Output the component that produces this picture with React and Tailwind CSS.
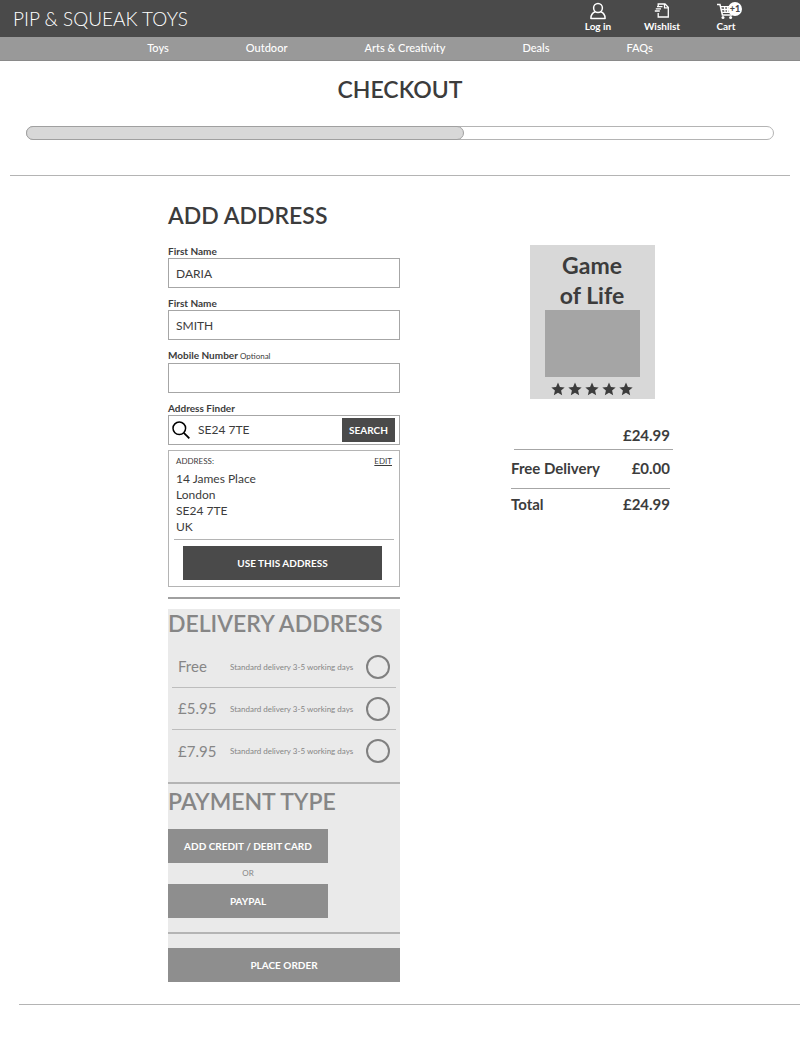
import React, { useState } from 'react';

const NAV_LINKS = ['Toys', 'Outdoor', 'Arts & Creativity', 'Deals', 'FAQs'];

const DELIVERY_OPTIONS = [
  { id: 'free', price: 'Free' },
  { id: 'mid', price: '£5.95' },
  { id: 'fast', price: '£7.95' },
];

const ADDRESS_LINES = ['14 James Place', 'London', 'SE24 7TE', 'UK'];

function UserIcon() {
  return (
    <svg viewBox="0 0 18 18" className="h-[18px] w-[18px]" fill="none" stroke="currentColor" strokeWidth="1.5" strokeLinejoin="round">
      <circle cx="9" cy="6" r="4.4" />
      <path d="M6.4 9.8C3.4 10.8 1.9 13 1.9 16.4h14.2c0-3.4-1.5-5.6-4.5-6.6" />
    </svg>
  );
}

function WishlistIcon() {
  return (
    <svg viewBox="0 0 18 18" className="h-[18px] w-[18px]" fill="none" stroke="currentColor" strokeWidth="1.3">
      <path d="M5.2 4V2H12l3.3 3.3V15H5.2v-4" />
      <path d="M11.5 2v3.800h3.800M4 4.600h5.500M2.800 6.800H8M1.800 9h5" />
    </svg>
  );
}

function CartIcon() {
  return (
    <svg viewBox="0 0 20 18" className="h-[18px] w-5" fill="none" stroke="currentColor" strokeWidth="1.5">
      <path d="M1 2.600h3L6.400 13H16" />
      <path d="M4.600 4.600H17l-1.400 5.800H6.200M5 7.500h11M8.500 4.600l.6 6M11.500 4.600v6M14.500 4.600l-.6 6" strokeWidth="1.3" />
      <circle cx="7" cy="15.600" r="1.5" fill="currentColor" stroke="none" />
      <circle cx="14.600" cy="15.600" r="1.5" fill="currentColor" stroke="none" />
    </svg>
  );
}

function Star() {
  return (
    <svg viewBox="0 0 24 24" className="h-3.5 w-3.5" fill="currentColor">
      <path d="M12 1l3.300 7.500 8.100.8-6.100 5.400 1.800 8L12 18.500l-7.100 4.200 1.800-8L.6 9.300l8.100-.8z" />
    </svg>
  );
}

function IconLink({ label, children }) {
  return (
    <a href="#" className="flex w-16 flex-col items-center pb-1 text-[10px] leading-3 font-bold text-white">
      <span className="relative">{children}</span>
      {label}
    </a>
  );
}

function Field({ id, label, hint, defaultValue }) {
  return (
    <div>
      <label htmlFor={id} className="block text-[10px] leading-[14px] font-bold">
        {label}
        {hint && <span className="text-[8px] font-normal"> {hint}</span>}
      </label>
      <input
        id={id}
        type="text"
        defaultValue={defaultValue}
        className="block h-[30px] w-full border border-[#a6a6a6] px-[7px] text-xs outline-none"
      />
    </div>
  );
}

function SectionTitle({ children }) {
  return <h2 className="text-[23px] leading-7 font-semibold whitespace-nowrap">{children}</h2>;
}

export default function App() {
  const [delivery, setDelivery] = useState(null);

  return (
    <div className="bg-white font-['Lato','Open_Sans',sans-serif] text-[#3c3c3c]">
      <header>
        <div className="flex h-[37px] items-center justify-between bg-[#4a4a4a] pr-[42px] pl-[13px]">
          <a href="#" className="text-[19px] leading-6 font-light text-white">PIP &amp; SQUEAK TOYS</a>
          <div className="flex">
            <IconLink label="Log in"><UserIcon /></IconLink>
            <IconLink label="Wishlist"><WishlistIcon /></IconLink>
            <IconLink label="Cart">
              <CartIcon />
              <span className="absolute top-0 -right-1.5 flex h-3.5 w-3.5 items-center justify-center rounded-full bg-white text-[9px] leading-3 font-black text-[#4a4a4a]">
                +1
              </span>
            </IconLink>
          </div>
        </div>
        <nav className="flex h-6 items-center justify-center gap-[77px] border-b border-[#8a8a8a] bg-[#999] text-[11px] font-medium text-white">
          {NAV_LINKS.map((link) => (
            <a key={link} href="#">{link}</a>
          ))}
        </nav>
      </header>

      <h1 className="mt-3 text-center text-[23px] leading-8 font-semibold">CHECKOUT</h1>

      <div className="mx-[26px] mt-[21px] h-3.5 rounded-full border border-[#b4b4b4]">
        <div className="-m-px h-3.5 w-[58.7%] rounded-full border border-[#a0a0a0] bg-[#d8d8d8]" />
      </div>

      <hr className="mx-2.5 mt-[35px] border-[#b4b4b4]" />

      <main className="flex items-start gap-[111px] pt-[25px] pl-[168px]">
        <form className="w-[232px]" onSubmit={(e) => e.preventDefault()}>
          <SectionTitle>ADD ADDRESS</SectionTitle>

          <div className="mt-[15px] space-y-2">
            <Field id="first-name" label="First Name" defaultValue="DARIA" />
            <Field id="last-name" label="First Name" defaultValue="SMITH" />
            <Field id="mobile" label="Mobile Number" hint="Optional" />
            <div>
              <label htmlFor="finder" className="block text-[10px] leading-[14px] font-bold">Address Finder</label>
              <div className="flex h-[30px] items-center border border-[#a6a6a6] pr-1 pl-[3px]">
                <svg viewBox="0 0 18 18" className="h-[18px] w-[18px] shrink-0 text-black" fill="none" stroke="currentColor" strokeWidth="1.5">
                  <circle cx="7.3" cy="7.3" r="6.3" />
                  <path d="M11.8 11.8L17.3 17.3" strokeWidth="1.8" />
                </svg>
                <input id="finder" type="text" defaultValue="SE24 7TE" className="ml-2 w-full min-w-0 text-xs outline-none" />
                <button type="button" className="h-6 w-[53px] shrink-0 bg-[#4a4a4a] text-[10px] font-bold text-white">SEARCH</button>
              </div>
            </div>
          </div>

          <div className="mt-[5px] border border-[#b4b4b4] px-[5px] pt-1 pb-1.5">
            <div className="flex justify-between px-0.5 text-[8px] leading-3">
              <span>ADDRESS:</span>
              <a href="#" className="underline">EDIT</a>
            </div>
            <address className="mt-1 px-0.5 pb-1 text-xs leading-4 not-italic">
              {ADDRESS_LINES.map((line) => (
                <div key={line}>{line}</div>
              ))}
            </address>
            <hr className="border-[#b4b4b4]" />
            <button type="button" className="mx-[9px] mt-1.5 block h-[34px] w-[199px] bg-[#4a4a4a] text-[10px] font-bold text-white">
              USE THIS ADDRESS
            </button>
          </div>

          <hr className="mt-2.5 border-t-2 border-[#a0a0a0]" />

          <div className="mt-2.5 bg-[#eaeaea] text-[#868686]">
            <SectionTitle>DELIVERY ADDRESS</SectionTitle>
            <div className="px-1 pt-[9px] pb-2.5">
              {DELIVERY_OPTIONS.map(({ id, price }) => (
                <label key={id} className="flex h-[42px] items-center border-b border-[#bdbdbd] px-1.5 last:border-b-0">
                  <span className="w-[52px] text-[15px]">{price}</span>
                  <span className="flex-1 text-[8px] whitespace-nowrap">Standard delivery 3-5 working days</span>
                  <input
                    type="radio"
                    name="delivery"
                    checked={delivery === id}
                    onChange={() => setDelivery(id)}
                    className="h-6 w-6 appearance-none rounded-full border-2 border-[#808080] checked:bg-[#808080]"
                  />
                </label>
              ))}
            </div>

            <hr className="border-t-2 border-[#b4b4b4]" />

            <div className="pt-[3px] pb-3.5">
              <SectionTitle>PAYMENT TYPE</SectionTitle>
              <div className="mt-3.5 flex w-40 flex-col text-center">
                <button type="button" className="h-[34px] bg-[#8e8e8e] text-[10px] font-bold text-white">ADD CREDIT / DEBIT CARD</button>
                <span className="text-[8px] leading-[21px]">OR</span>
                <button type="button" className="h-[34px] bg-[#8e8e8e] text-[10px] font-bold text-white">PAYPAL</button>
              </div>
            </div>

            <hr className="border-t-2 border-[#b4b4b4]" />

            <div className="pt-3.5">
              <button type="submit" className="block h-[34px] w-full bg-[#8e8e8e] text-[10px] font-bold text-white">PLACE ORDER</button>
            </div>
          </div>
        </form>

        <aside className="w-[162px] pt-11">
          <article className="mx-auto flex w-[125px] flex-col items-center bg-[#d8d8d8] pt-[5px]">
            <h3 className="text-center text-[23px] leading-[30px] font-bold">
              Game
              <br />
              of Life
            </h3>
            <div className="h-[67px] w-[95px] bg-[#a5a5a5]" />
            <div className="flex gap-[3px] pt-[5px] pb-[3px]" role="img" aria-label="5 stars">
              {[1, 2, 3, 4, 5].map((n) => (
                <Star key={n} />
              ))}
            </div>
          </article>

          <dl className="mt-6 text-[15px] leading-6 font-bold">
            <div className="ml-[3px] flex justify-end border-b border-[#a6a6a6] pr-[3px] pb-0.5">
              <dd>£24.99</dd>
            </div>
            <div className="mr-[3px] flex justify-between border-b border-[#a6a6a6] pt-1.5 pb-2">
              <dt>Free Delivery</dt>
              <dd>£0.00</dd>
            </div>
            <div className="mr-[3px] flex justify-between pt-[3px]">
              <dt>Total</dt>
              <dd>£24.99</dd>
            </div>
          </dl>
        </aside>
      </main>

      <hr className="mt-[22px] mb-[45px] ml-[19px] border-[#b4b4b4]" />
    </div>
  );
}
